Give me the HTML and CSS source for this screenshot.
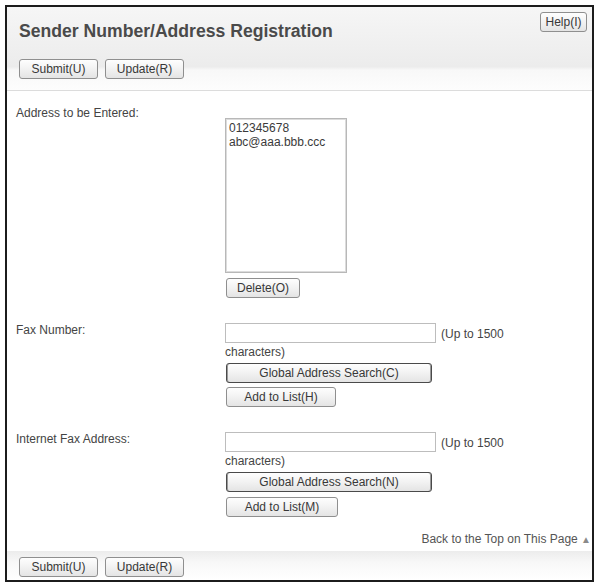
FILE: index.html
```html
<!DOCTYPE html>
<html>
<head>
<meta charset="utf-8">
<title>Sender Number/Address Registration</title>
<link rel="stylesheet" href="styles.css">
</head>
<body>
<div class="frame">
  <div class="header">
    <div class="title-row">
      <h1 class="title">Sender Number/Address Registration</h1>
      <button class="btn btn-help">Help(I)</button>
    </div>
    <div class="actions">
      <button class="btn btn-main">Submit(U)</button>
      <button class="btn btn-main">Update(R)</button>
    </div>
  </div>

  <div class="content">
    <div class="form">
      <div class="label">Address to be Entered:</div>
      <div class="field field-list">
        <div class="listbox">
          <div class="opt">012345678</div>
          <div class="opt">abc@aaa.bbb.ccc</div>
        </div>
        <button class="btn btn-delete">Delete(O)</button>
      </div>

      <div class="label">Fax Number:</div>
      <div class="field">
        <div class="input-line"><input class="text" type="text"><span class="hint">(Up to 1500 characters)</span></div>
        <button class="btn btn-global">Global Address Search(C)</button>
        <button class="btn btn-add">Add to List(H)</button>
      </div>

      <div class="label">Internet Fax Address:</div>
      <div class="field">
        <div class="input-line"><input class="text" type="text"><span class="hint">(Up to 1500 characters)</span></div>
        <button class="btn btn-global">Global Address Search(N)</button>
        <button class="btn btn-add btn-add-m">Add to List(M)</button>
      </div>
    </div>

    <div class="back-top">Back to the Top on This Page <span class="tri">&#9650;</span></div>
  </div>

  <div class="footer">
    <button class="btn btn-main">Submit(U)</button>
    <button class="btn btn-main">Update(R)</button>
  </div>
</div>
</body>
</html>
```

FILE: styles.css
```css
html, body {
  margin: 0;
  padding: 0;
  background: #ffffff;
}

body {
  font-family: "Liberation Sans", Arial, sans-serif;
  font-size: 12px;
  color: #444444;
}

.frame {
  margin: 5px 0 0 5px;
  width: 585px;
  border: 2px solid #1c1c1c;
  background: #ffffff;
}

/* Header */
.header {
  height: 83px;
  border-bottom: 1px solid #dcdcdc;
  background: linear-gradient(#f6f6f6 0%, #ececec 72%, #f8f8f8 76%, #fdfdfd 100%);
  box-sizing: content-box;
}

.title-row {
  display: flex;
  justify-content: space-between;
  align-items: flex-start;
  padding: 0 5px 0 12px;
}

.title {
  margin: 14px 0 0 0;
  font-size: 17.6px;
  line-height: 20px;
  font-weight: bold;
  color: #4a4a4a;
}

.actions {
  display: flex;
  gap: 7px;
  padding-left: 12px;
  margin-top: 18px;
}

/* Buttons */
.btn {
  display: block;
  height: 20px;
  padding: 0;
  font-family: "Liberation Sans", Arial, sans-serif;
  font-size: 12px;
  color: #383838;
  border: 1px solid #8f8f8f;
  border-radius: 3px;
  background: linear-gradient(#fefefe 0%, #f2f2f2 50%, #e4e4e4 100%);
  box-sizing: border-box;
  line-height: 16px;
}

.btn-help {
  width: 47px;
  margin-top: 5px;
}

.btn-main {
  width: 79px;
}

.btn-delete {
  width: 74px;
  margin: 5px 0 0 1px;
}

.btn-global {
  width: 206px;
  margin: 2px 0 0 1px;
  border: 1px solid #4a4a4a;
  box-shadow: inset 1px 0 0 #9a9a9a, inset -1px 0 0 #9a9a9a;
}

.btn-add {
  width: 110px;
  margin: 4px 0 0 1px;
}

.btn-add-m {
  width: 112px;
  margin-top: 5px;
}

/* Content */
.content {
  padding: 15px 0 0 9px;
}

.form {
  display: grid;
  grid-template-columns: 209px 290px;
  row-gap: 25px;
}

.label {
  line-height: 14px;
  color: #444444;
}

.field-list {
  padding-top: 12px;
}

.listbox {
  width: 122px;
  height: 155px;
  box-sizing: border-box;
  border: 1px solid #b8b8b8;
  box-shadow: inset 1px 1px 0 #dcdcdc, inset -1px -1px 0 #dcdcdc;
  padding: 2px 3px;
  background: #ffffff;
}

.opt {
  line-height: 14px;
  color: #3a3a3a;
}

.field {
  line-height: 14px;
}

.input-line {
  line-height: 18px;
}

.text {
  width: 211px;
  height: 20px;
  box-sizing: border-box;
  border: 1px solid #bdbdbd;
  margin: 0 5px 0 0;
  padding: 0;
  vertical-align: 1px;
  font-family: "Liberation Sans", Arial, sans-serif;
  font-size: 12px;
}

.hint {
  color: #444444;
}

.back-top {
  text-align: right;
  padding-right: 1px;
  margin-top: 15px;
  line-height: 14px;
  color: #555555;
}

.tri {
  color: #8a8a8a;
  font-size: 10px;
}

/* Footer */
.footer {
  display: flex;
  gap: 7px;
  margin-top: 4px;
  padding: 6px 0 3px 12px;
  background: linear-gradient(#ececec 0%, #f8f8f8 40%, #ffffff 100%);
}
```
